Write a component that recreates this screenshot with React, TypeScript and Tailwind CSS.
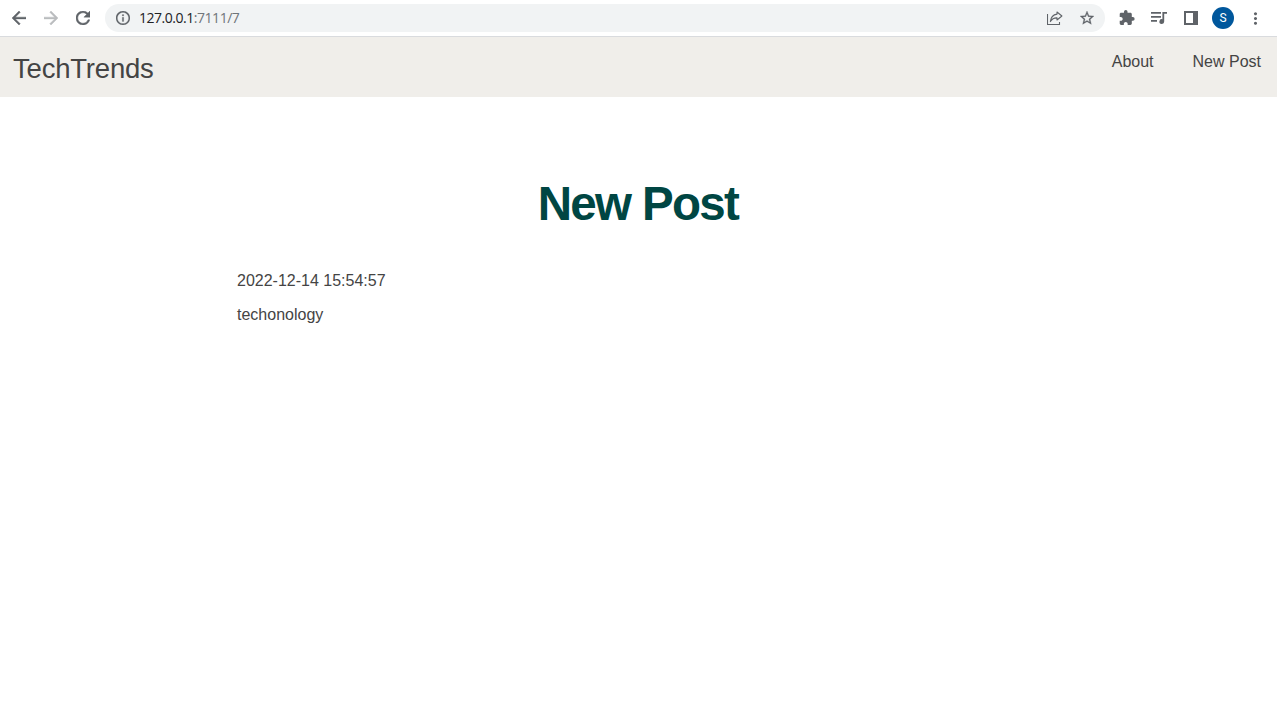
import React from "react";
import {
  MdArrowBack,
  MdArrowForward,
  MdExtension,
  MdInfoOutline,
  MdMoreVert,
  MdRefresh,
  MdStarBorder,
} from "react-icons/md";

function ShareIcon() {
  return (
    <svg width="16" height="16" viewBox="0 0 16 16" fill="none" stroke="#5f6368" strokeWidth="1.1">
      <path d="M0.5 4V14.5H12.5V12" />
      <path d="M10 2L14.9 6L10 10V7.9C7 7.8 5 8.8 3.4 11.6C3.8 7.2 6.4 4.6 10 4.1Z" strokeLinejoin="round" />
    </svg>
  );
}

function PlaylistIcon() {
  return (
    <svg width="16" height="14" viewBox="0 0 16 14" fill="#5f6368">
      <path d="M0 1H10V2.7H0ZM0 5H10V6.7H0ZM0 9H6V10.7H0Z" />
      <path d="M11.4 1H16V2.8H13.2V10.5A2.4 2.4 0 1 1 11.4 8.2Z" />
    </svg>
  );
}

function SidePanelIcon() {
  return (
    <svg width="14" height="14" viewBox="0 0 14 14" fill="#5f6368">
      <path fillRule="evenodd" d="M0 0H14V14H0ZM2 2V12H9V2Z" />
    </svg>
  );
}

function Slot({ children }: { children: React.ReactNode }) {
  return <span className="flex h-8 w-8 shrink-0 items-center justify-center">{children}</span>;
}

function BrowserBar() {
  return (
    <div className="flex h-[37px] items-start border-b border-[#d9dbde] bg-white pl-[3px] text-[#5f6368]">
      <div className="flex pt-[2px]">
        <Slot><MdArrowBack size={14} viewBox="4 4 16 16" strokeWidth={0.5} /></Slot>
        <Slot><MdArrowForward size={14} viewBox="4 4 16 16" strokeWidth={0.5} className="text-[#babcbe]" /></Slot>
        <Slot><MdRefresh size={14} viewBox="4 4 16 16" strokeWidth={0.5} /></Slot>
      </div>
      <div className="mt-1 ml-[6px] flex h-7 w-[1000px] items-center rounded-full bg-[#f1f3f4] pr-[2px] pl-[2px]">
        <Slot><MdInfoOutline size={14} viewBox="2 2 20 20" strokeWidth={0.3} /></Slot>
        <span className="font-['Open_Sans',sans-serif] text-[14px] leading-7 tracking-[-0.47px] text-[#202124]">
          127.0.0.1<span className="text-[#70757a]">:7111/7</span>
        </span>
        <div className="ml-auto flex">
          <Slot><ShareIcon /></Slot>
          <Slot><MdStarBorder size={14} viewBox="2 2 20 20" strokeWidth={0.4} /></Slot>
        </div>
      </div>
      <div className="ml-[6px] flex pt-[2px]">
        <Slot><MdExtension size={16} viewBox="1 1 22.5 22.5" /></Slot>
        <Slot><PlaylistIcon /></Slot>
        <Slot><SidePanelIcon /></Slot>
        <Slot>
          <span className="flex h-[22px] w-[22px] items-center justify-center rounded-full bg-[#00579c] font-[Roboto,sans-serif] text-xs text-white">
            S
          </span>
        </Slot>
        <Slot><MdMoreVert size={19} /></Slot>
      </div>
    </div>
  );
}

function SiteHeader() {
  return (
    <header className="flex h-[60px] items-start justify-between bg-[#f0eeea] pr-4 pl-[13px]">
      <a className="pt-3 text-[27.5px] leading-10 tracking-[-0.2px]">TechTrends</a>
      <nav className="flex gap-[39px] pt-[13px] text-base leading-6">
        <a>About</a>
        <a>New Post</a>
      </nav>
    </header>
  );
}

export default function App() {
  return (
    <div className="min-h-screen bg-white font-['Liberation_Sans',Arial,sans-serif] text-[#444]">
      <BrowserBar />
      <SiteHeader />
      <main className="mx-auto w-[803px] pt-[79px]">
        <h1 className="pr-px text-center text-[47.5px] leading-[56px] font-bold tracking-[-1.65px] text-[#004643]">New Post</h1>
        <p className="mt-[37px] text-base leading-6">2022-12-14 15:54:57</p>
        <p className="mt-[10px] text-base leading-6">techonology</p>
      </main>
    </div>
  );
}
